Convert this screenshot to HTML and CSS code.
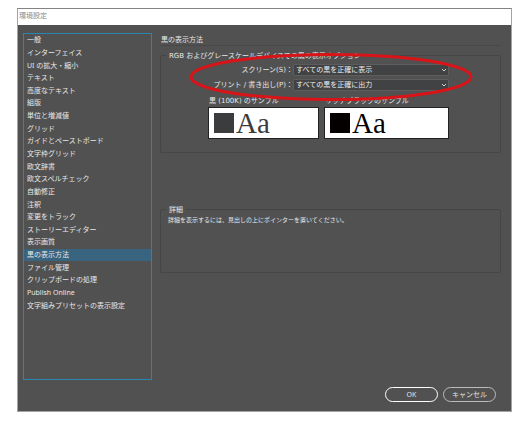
FILE: index.html
```html
<!DOCTYPE html>
<html lang="ja">
<head>
<meta charset="utf-8">
<title>環境設定</title>
<link rel="stylesheet" href="styles.css">
</head>
<body>
<div class="dialog">
  <header class="titlebar">環境設定</header>
  <div class="content">
    <nav class="sidebar">
      <ul class="menu">
        <li><a href="#">一般</a></li>
        <li><a href="#">インターフェイス</a></li>
        <li><a href="#">UI の拡大・縮小</a></li>
        <li><a href="#">テキスト</a></li>
        <li><a href="#">高度なテキスト</a></li>
        <li><a href="#">組版</a></li>
        <li><a href="#">単位と増減値</a></li>
        <li><a href="#">グリッド</a></li>
        <li><a href="#">ガイドとペーストボード</a></li>
        <li><a href="#">文字枠グリッド</a></li>
        <li><a href="#">欧文辞書</a></li>
        <li><a href="#">欧文スペルチェック</a></li>
        <li><a href="#">自動修正</a></li>
        <li><a href="#">注釈</a></li>
        <li><a href="#">変更をトラック</a></li>
        <li><a href="#">ストーリーエディター</a></li>
        <li><a href="#">表示画質</a></li>
        <li class="selected"><a href="#" aria-current="page">黒の表示方法</a></li>
        <li><a href="#">ファイル管理</a></li>
        <li><a href="#">クリップボードの処理</a></li>
        <li><a href="#">Publish Online</a></li>
        <li><a href="#">文字組みプリセットの表示設定</a></li>
      </ul>
    </nav>
    <main class="panel">
      <h1 class="heading">黒の表示方法</h1>
      <section class="group options">
        <h2 class="legend">RGB およびグレースケールデバイスでの黒の表示オプション</h2>
        <div class="form">
          <label for="screen">スクリーン(S)：</label>
          <div class="picker">
            <select id="screen"><option>すべての黒を正確に表示</option></select>
            <svg class="chevron" viewBox="0 0 6 4"><path d="M1 1l2 2 2-2"/></svg>
          </div>
          <label for="print">プリント / 書き出し(P)：</label>
          <div class="picker">
            <select id="print"><option>すべての黒を正確に出力</option></select>
            <svg class="chevron" viewBox="0 0 6 4"><path d="M1 1l2 2 2-2"/></svg>
          </div>
        </div>
        <div class="samples">
          <figure class="sample">
            <figcaption>黒 (100K) のサンプル</figcaption>
            <div class="preview soft"><span class="swatch"></span>Aa</div>
          </figure>
          <figure class="sample rich-sample">
            <figcaption>リッチブラックのサンプル</figcaption>
            <div class="preview rich"><span class="swatch"></span>Aa</div>
          </figure>
        </div>
        <svg class="marker" viewBox="0 0 284 50"><ellipse cx="142" cy="25" rx="140" ry="22.5"/></svg>
      </section>
      <section class="group details">
        <h2 class="legend">詳細</h2>
        <p class="hint">詳細を表示するには、見出しの上にポインターを置いてください。</p>
      </section>
    </main>
  </div>
  <footer class="actions">
    <button class="primary" type="button">OK</button>
    <button type="button">キャンセル</button>
  </footer>
</div>
</body>
</html>
```
FILE: styles.css
```css
* {
  box-sizing: border-box;
}

body {
  margin: 0;
  padding: 8px 11px 0 17px;
  background: #fff;
  color: #e8e8e8;
  font: 7px/10px "Noto Sans", "Noto Sans CJK JP", sans-serif;
}

.dialog {
  background: #515151;
  border: 1px solid #a3a3a3;
  border-top-color: #838383;
}

.titlebar {
  height: 16px;
  padding: 2px 1px 0;
  background: #fff;
  color: #888;
}

.content {
  display: flex;
  gap: 8px;
  padding: 8px 10px 0 5px;
}

.sidebar {
  flex: none;
  width: 129px;
  min-height: 347px;
  border: 1px solid #2a86b0;
}

.menu {
  display: grid;
  grid-auto-rows: 1fr;
  height: 278px;
  margin: 0;
  padding: 0;
  list-style: none;
}

.menu li {
  display: flex;
  align-items: center;
  padding-left: 3px;
}

.menu a {
  color: inherit;
  text-decoration: none;
}

.menu .selected {
  background: #386480;
}

.panel {
  flex: 1;
  min-width: 0;
  font-family: "DejaVu Sans", "Noto Sans CJK JP", sans-serif;
}

.heading {
  margin: 0 0 9px;
  padding: 2px 1px 0;
  border-bottom: 1px solid #484848;
  font-size: 7px;
  font-weight: 400;
}

.group {
  position: relative;
  border: 1px solid #464646;
  border-radius: 2px;
}

.options {
  min-height: 98px;
}

.details {
  margin-top: 56px;
  min-height: 64px;
}

.legend {
  width: fit-content;
  margin: -5px 0 0 5px;
  padding: 0 3px;
  background: #515151;
  font-size: 7px;
  font-weight: 400;
}

.form {
  display: grid;
  grid-template-columns: 132px 1fr;
  row-gap: 3px;
  margin: 3px 51px 0 0;
  line-height: 12px;
}

.form label {
  padding-top: 1px;
  line-height: 11px;
  text-align: right;
  white-space: nowrap;
}

.picker {
  position: relative;
}

.picker select {
  display: block;
  width: 100%;
  height: 12px;
  padding: 1px 2px 0;
  appearance: none;
  background: #414244;
  border: 1px solid #5d5d5d;
  border-radius: 1px;
  color: #eee;
  font: inherit;
  line-height: 9px;
}

.chevron {
  position: absolute;
  top: 4px;
  right: 2px;
  width: 6px;
  height: 4px;
  fill: none;
  stroke: #ccc;
}

.samples {
  display: flex;
  gap: 5px;
  margin: 3px 51px 0 47px;
}

.sample {
  flex: 111;
  margin: 0;
}

.rich-sample {
  flex-grow: 125;
}

.sample figcaption {
  padding: 2px 1px 1px;
}

.preview {
  display: flex;
  align-items: center;
  gap: 2px;
  height: 32px;
  padding-left: 5px;
  background: #fff;
  border: 1px solid #222;
  font: 29px/30px "Liberation Serif", serif;
}

.swatch {
  width: 20px;
  height: 20px;
  background: currentColor;
}

.soft {
  color: #3b3c3e;
}

.rich {
  color: #050000;
}

.marker {
  position: absolute;
  top: -4px;
  left: 28px;
  width: 284px;
  height: 50px;
  fill: none;
  stroke: #d91418;
  stroke-width: 3px;
  pointer-events: none;
}

.hint {
  margin: 0;
  padding: 0 7px;
  font-size: 6px;
}

.actions {
  display: flex;
  justify-content: flex-end;
  gap: 5px;
  padding: 7px 15px 9px;
}

.actions button {
  width: 53px;
  height: 15px;
  padding: 0;
  background: none;
  border: 1px solid #bbb;
  border-radius: 8px;
  color: #e4e4e4;
  font: inherit;
}

.actions .primary {
  border-color: #fff;
}
```
